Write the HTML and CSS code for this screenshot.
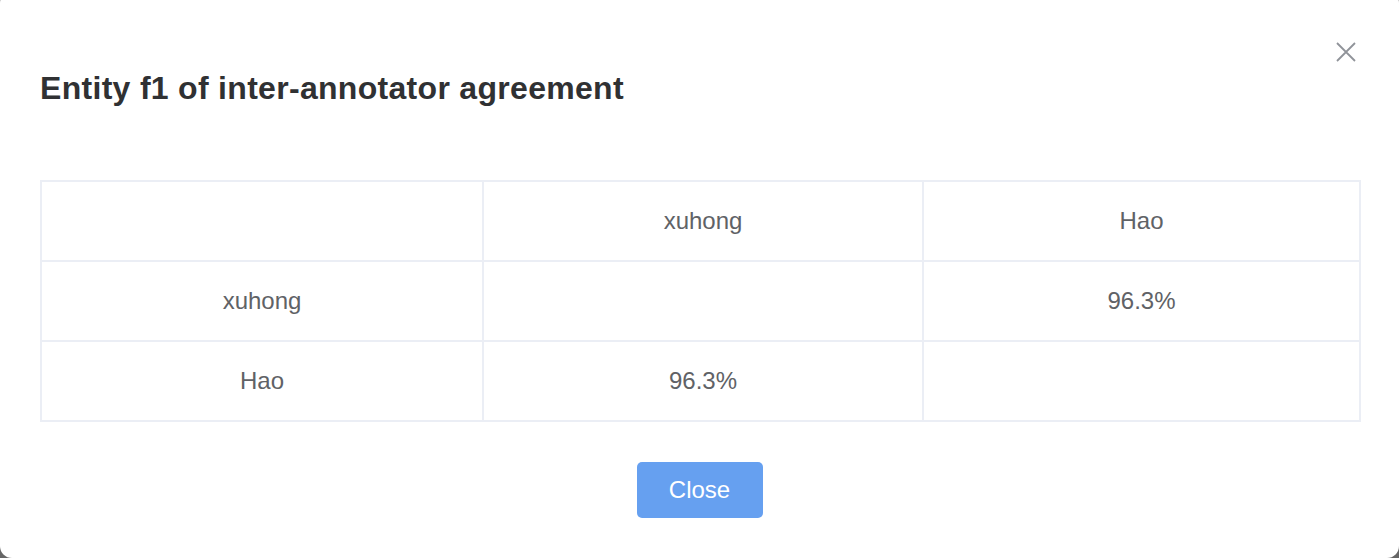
FILE: index.html
```html
<!DOCTYPE html>
<html>
<head>
<meta charset="utf-8">
<link rel="stylesheet" href="styles.css">
</head>
<body>
<div class="dialog">
  <div class="header">
    <h2 class="title">Entity f1 of inter-annotator agreement</h2>
    <button class="close-x" aria-label="Close">
      <svg width="20" height="20" viewBox="0 0 20 20"><path d="M1 1 L19 19 M19 1 L1 19" stroke="#909399" stroke-width="1.8" fill="none"/></svg>
    </button>
  </div>
  <div class="body">
    <table class="grid">
      <colgroup><col class="c1"><col class="c2"><col class="c3"></colgroup>
      <tr><td></td><td>xuhong</td><td>Hao</td></tr>
      <tr><td>xuhong</td><td></td><td>96.3%</td></tr>
      <tr><td>Hao</td><td>96.3%</td><td></td></tr>
    </table>
  </div>
  <div class="footer">
    <button class="btn-close">Close</button>
  </div>
</div>
</body>
</html>
```
FILE: styles.css
```css
html, body {
  margin: 0;
  padding: 0;
  height: 100%;
  overflow: hidden;
  background: #666666;
}
body {
  font-family: "Liberation Sans", Arial, sans-serif;
}
.dialog {
  margin-top: -9px;
  height: 567px;
  background: #ffffff;
  border-radius: 12px;
  box-sizing: border-box;
  display: flex;
  flex-direction: column;
}
.header {
  position: relative;
  padding: 77px 40px 0 40px;
}
.title {
  margin: 0;
  font-size: 32px;
  line-height: 40px;
  font-weight: bold;
  letter-spacing: 0.3px;
  color: #303133;
}
.close-x {
  position: absolute;
  top: 51px;
  right: 43px;
  padding: 0;
  border: 0;
  background: none;
  width: 20px;
  height: 20px;
  display: flex;
}
.body {
  padding: 72px 38px 0 40px;
}
.grid {
  width: 100%;
  border-collapse: collapse;
  table-layout: fixed;
}
.grid .c1 { width: 442px; }
.grid .c2 { width: 440px; }
.grid td {
  border: 2px solid #ebeef5;
  height: 78px;
  padding: 0;
  text-align: center;
  font-size: 24px;
  color: #606266;
}
.footer {
  display: flex;
  justify-content: center;
  padding-top: 40px;
}
.btn-close {
  width: 126px;
  height: 56px;
  border: 0;
  border-radius: 5px;
  background: #66a0f0;
  color: #ffffff;
  font-family: "Liberation Sans", Arial, sans-serif;
  font-size: 24px;
}
```
